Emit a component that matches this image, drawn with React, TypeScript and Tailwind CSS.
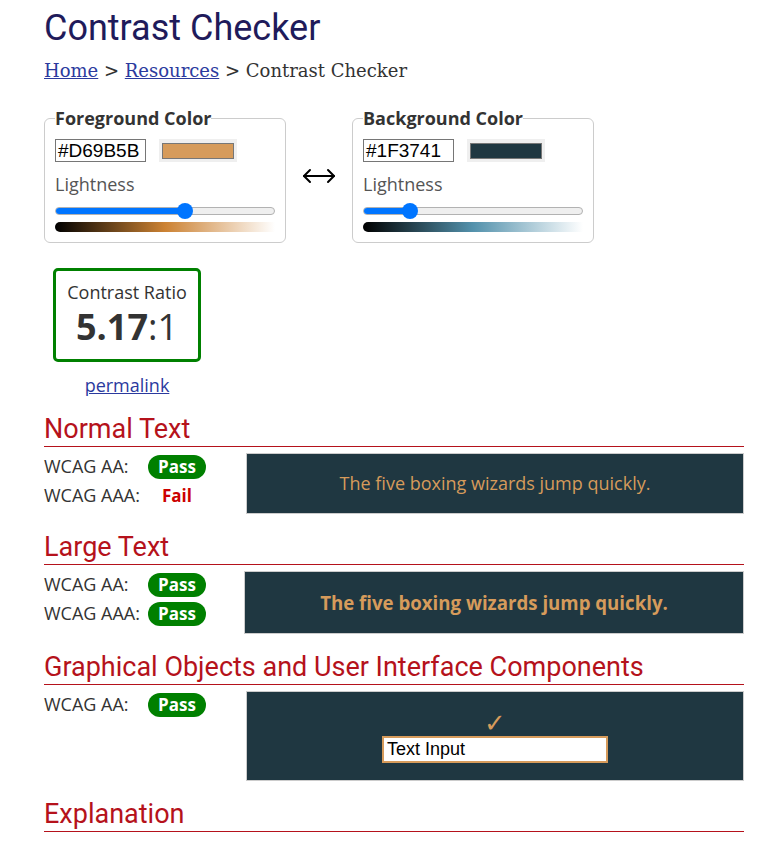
import React from 'react';

type ColorPanelProps = {
  legend: string;
  hex: string;
  lightness: number;
  gradient: string;
};

function Slider({ value }: { value: number }) {
  return (
    <div className="relative h-[16px] flex items-center">
      <div className="w-full h-[8px] rounded-full bg-[#efefef] border border-[#b2b2b2] overflow-hidden">
        <div className="h-full bg-[#0075ff]" style={{ width: `${value}%` }} />
      </div>
      <div
        className="absolute top-0 w-[16px] h-[16px] rounded-full bg-[#0075ff]"
        style={{ left: `calc(${value}% - ${value * 0.16}px)` }}
      />
    </div>
  );
}

function ColorPanel({ legend, hex, lightness, gradient }: ColorPanelProps) {
  return (
    <fieldset className="w-[242px] border border-[#cccccc] rounded-[6px] px-[10px] pb-[10px]">
      <legend className="font-bold text-[18px] text-[#333] leading-[20px]">{legend}</legend>
      <div className="flex items-center gap-[13px] mt-[11px]">
        <div className="w-[91px] h-[23px] border border-[#767676] flex items-center px-[2px] font-['Liberation_Sans',sans-serif] text-[19px] leading-none text-black">
          {hex}
        </div>
        <div className="w-[78px] h-[23px] bg-[#efefef] flex items-center justify-center">
          <div className="w-[72px] h-[16px] border border-[#777]" style={{ backgroundColor: hex }} />
        </div>
      </div>
      <div className="text-[18px] text-[#555] mt-[10px] leading-[24px]">Lightness</div>
      <div className="mt-[7px]">
        <Slider value={lightness} />
      </div>
      <div className="h-[10px] mt-[3px] rounded-l-full" style={{ background: gradient }} />
    </fieldset>
  );
}

function Badge({ pass }: { pass: boolean }) {
  if (!pass) {
    return <span className="inline-block w-[58px] text-center font-bold text-[17px] text-[#cc0000]">Fail</span>;
  }
  return (
    <span className="inline-flex items-center justify-center w-[58px] h-[24px] rounded-full bg-[#008000] text-white font-bold text-[17px] leading-none">
      Pass
    </span>
  );
}

function SectionHeading({ children }: { children: React.ReactNode }) {
  return (
    <h2 className="font-['Roboto',sans-serif] text-[27px] leading-[30px] text-[#b5121b] border-b border-[#b5121b] pb-[2px]">
      {children}
    </h2>
  );
}

function Row({ label, pass }: { label: string; pass: boolean }) {
  return (
    <div className="flex items-center h-[27px]">
      <span className="w-[104px] text-[18px] text-[#333]">{label}</span>
      <Badge pass={pass} />
    </div>
  );
}

function ArrowBoth() {
  return (
    <svg width="34" height="16" viewBox="0 0 34 16" fill="none" stroke="black" strokeWidth="2" strokeLinecap="round" strokeLinejoin="round">
      <path d="M2 8 H32" />
      <path d="M8 2 L2 8 L8 14" />
      <path d="M26 2 L32 8 L26 14" />
    </svg>
  );
}

export default function App() {
  const fg = '#D69B5B';
  const bg = '#1F3741';

  return (
    <div className="pl-[44px] w-[744px] font-['Open_Sans',sans-serif] text-[#333] bg-white min-h-[842px]">
      <h1 className="font-['Roboto',sans-serif] text-[36px] leading-[43px] text-[#1f1b5b] pt-[7px]">Contrast Checker</h1>

      <nav className="font-['DejaVu_Serif',serif] text-[18px] text-[#333] mt-[9px] leading-[24px]">
        <a href="#" className="underline text-[#2b3a9e]">Home</a>
        {' > '}
        <a href="#" className="underline text-[#2b3a9e]">Resources</a>
        {' > '}
        Contrast Checker
      </nav>

      <div className="flex items-center mt-[25px]">
        <ColorPanel
          legend="Foreground Color"
          hex={fg}
          lightness={60}
          gradient="linear-gradient(to right, #000000, hsl(31, 60%, 50%), #ffffff)"
        />
        <div className="w-[66px] flex justify-center">
          <ArrowBoth />
        </div>
        <ColorPanel
          legend="Background Color"
          hex={bg}
          lightness={19}
          gradient="linear-gradient(to right, #000000, hsl(198, 35%, 50%), #ffffff)"
        />
      </div>

      <div className="ml-[9px] mt-[25px] w-[148px] flex flex-col items-center">
        <div className="w-[148px] h-[94px] border-[3px] border-[#008000] rounded-[5px] flex flex-col items-center justify-center">
          <div className="text-[18px] text-[#333] leading-[24px] -mt-[4px]">Contrast Ratio</div>
          <div className="text-[36px] leading-[40px] text-[#333] mt-[3px]">
            <span className="font-bold">5.17</span>:1
          </div>
        </div>
        <a href="#" className="mt-[10px] text-[18px] underline text-[#2b3a9e]">permalink</a>
      </div>

      <div className="mt-[15px]">
        <SectionHeading>Normal Text</SectionHeading>
        <div className="flex mt-[6px]">
          <div className="w-[202px] flex flex-col gap-[2px]">
            <Row label="WCAG AA:" pass />
            <Row label="WCAG AAA:" pass={false} />
          </div>
          <div className="flex-1 h-[61px] bg-[#1F3741] border border-[#cccccc] flex items-center justify-center text-[18px] text-[#D69B5B]">
            The five boxing wizards jump quickly.
          </div>
        </div>
      </div>

      <div className="mt-[18px]">
        <SectionHeading>Large Text</SectionHeading>
        <div className="flex mt-[6px]">
          <div className="w-[200px] flex flex-col gap-[2px]">
            <Row label="WCAG AA:" pass />
            <Row label="WCAG AAA:" pass />
          </div>
          <div className="flex-1 h-[63px] bg-[#1F3741] border border-[#cccccc] flex items-center justify-center text-[18.67px] font-bold text-[#D69B5B]">
            The five boxing wizards jump quickly.
          </div>
        </div>
      </div>

      <div className="mt-[18px]">
        <SectionHeading>Graphical Objects and User Interface Components</SectionHeading>
        <div className="flex mt-[6px]">
          <div className="w-[202px]">
            <Row label="WCAG AA:" pass />
          </div>
          <div className="flex-1 h-[90px] bg-[#1F3741] border border-[#cccccc] flex flex-col items-center justify-center">
            <div className="text-[26px] leading-[26px] text-[#D69B5B] font-['DejaVu_Sans',sans-serif]">✓</div>
            <div className="w-[226px] h-[27px] bg-white border-2 border-[#D69B5B] flex items-center px-[3px] font-['Liberation_Sans',sans-serif] text-[18px] text-black">
              Text Input
            </div>
          </div>
        </div>
      </div>

      <div className="mt-[18px]">
        <SectionHeading>Explanation</SectionHeading>
      </div>
    </div>
  );
}
